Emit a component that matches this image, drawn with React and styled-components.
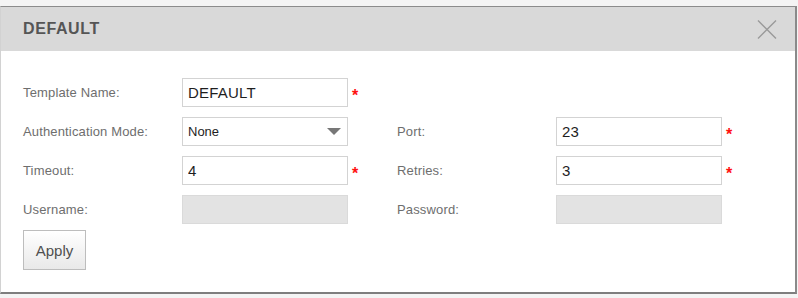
import React from "react";
import styled, { createGlobalStyle } from "styled-components";

const GlobalStyle = createGlobalStyle`
  html, body {
    margin: 0;
    padding: 0;
    background: #f4f4f4;
    font-family: "Liberation Sans", Arial, sans-serif;
  }
`;

const Page = styled.div`
  padding-top: 6px;
  width: 798px;
  height: 298px;
  box-sizing: border-box;
`;

const Dialog = styled.div`
  width: 797px;
  box-sizing: border-box;
  background: #ffffff;
  border-top: 1px solid #8c8c8c;
  border-left: 1px solid #d2d2d2;
  border-right: 2px solid #8a8a8a;
  border-bottom: 2px solid #7e7e7e;
`;

const Header = styled.div`
  height: 44px;
  background: #d9d9d9;
  display: flex;
  align-items: center;
  justify-content: space-between;
  padding: 0 18px 0 22px;
`;

const Title = styled.h2`
  margin: 0;
  font-size: 16px;
  font-weight: bold;
  color: #555555;
  letter-spacing: 0.6px;
`;

const CloseButton = styled.button`
  border: none;
  background: transparent;
  padding: 0;
  width: 20px;
  height: 20px;
  display: flex;
  align-items: center;
  justify-content: center;
  cursor: pointer;
`;

const Body = styled.div`
  padding: 27px 0 22px 22px;
`;

const Form = styled.div`
  display: grid;
  grid-template-columns: 159px 166px 49px 159px 166px 1fr;
  grid-auto-rows: 29px;
  row-gap: 10px;
  align-items: center;
`;

const Label = styled.label`
  font-size: 13px;
  color: #6e6e6e;
  letter-spacing: 0.15px;
`;

const TextInput = styled.input`
  box-sizing: border-box;
  width: 166px;
  height: 29px;
  margin: 0;
  padding: 0 5px;
  border: 1px solid #d3d3d3;
  background: ${(p) => (p.disabled ? "#e3e3e3" : "#ffffff")};
  border-color: ${(p) => (p.disabled ? "#dadada" : "#d3d3d3")};
  font-family: "Liberation Sans", Arial, sans-serif;
  font-size: 15px;
  letter-spacing: 0.2px;
  color: #1e1e1e;
  outline: none;
`;

const SelectBox = styled.div`
  box-sizing: border-box;
  width: 166px;
  height: 29px;
  border: 1px solid #d3d3d3;
  background: #ffffff;
  display: flex;
  align-items: center;
  justify-content: space-between;
  padding: 0 6px 0 5px;
  font-size: 13px;
  color: #1e1e1e;
`;

const Arrow = styled.span`
  width: 0;
  height: 0;
  border-left: 7px solid transparent;
  border-right: 7px solid transparent;
  border-top: 7px solid #777777;
`;

const Required = styled.span`
  padding-left: 4px;
  padding-top: 7px;
  color: #ff1010;
  font-size: 16px;
  font-weight: bold;
  line-height: 16px;
  align-self: center;
`;

const Spacer = styled.span``;

const ApplyButton = styled.button`
  margin-top: 6px;
  width: 63px;
  height: 40px;
  box-sizing: border-box;
  border: 1px solid #bdbdbd;
  background: linear-gradient(#ffffff, #e9e9e9);
  font-family: "Liberation Sans", Arial, sans-serif;
  font-size: 15px;
  color: #4f4f4f;
  padding: 0;
  cursor: pointer;
`;

export default function App() {
  return (
    <>
      <GlobalStyle />
      <Page>
        <Dialog>
          <Header>
            <Title>DEFAULT</Title>
            <CloseButton aria-label="Close">
              <svg width="20" height="19" viewBox="0 0 20 19">
                <path d="M1 0.5 L19 18.5 M19 0.5 L1 18.5" stroke="#9a9a9a" strokeWidth="1.4" fill="none" />
              </svg>
            </CloseButton>
          </Header>
          <Body>
            <Form>
              <Label>Template Name:</Label>
              <TextInput defaultValue="DEFAULT" />
              <Required>*</Required>
              <Spacer />
              <Spacer />
              <Spacer />

              <Label>Authentication Mode:</Label>
              <SelectBox>
                None
                <Arrow />
              </SelectBox>
              <Spacer />
              <Label>Port:</Label>
              <TextInput defaultValue="23" />
              <Required>*</Required>

              <Label>Timeout:</Label>
              <TextInput defaultValue="4" />
              <Required>*</Required>
              <Label>Retries:</Label>
              <TextInput defaultValue="3" />
              <Required>*</Required>

              <Label>Username:</Label>
              <TextInput disabled />
              <Spacer />
              <Label>Password:</Label>
              <TextInput disabled type="password" />
              <Spacer />
            </Form>
            <ApplyButton>Apply</ApplyButton>
          </Body>
        </Dialog>
      </Page>
    </>
  );
}
